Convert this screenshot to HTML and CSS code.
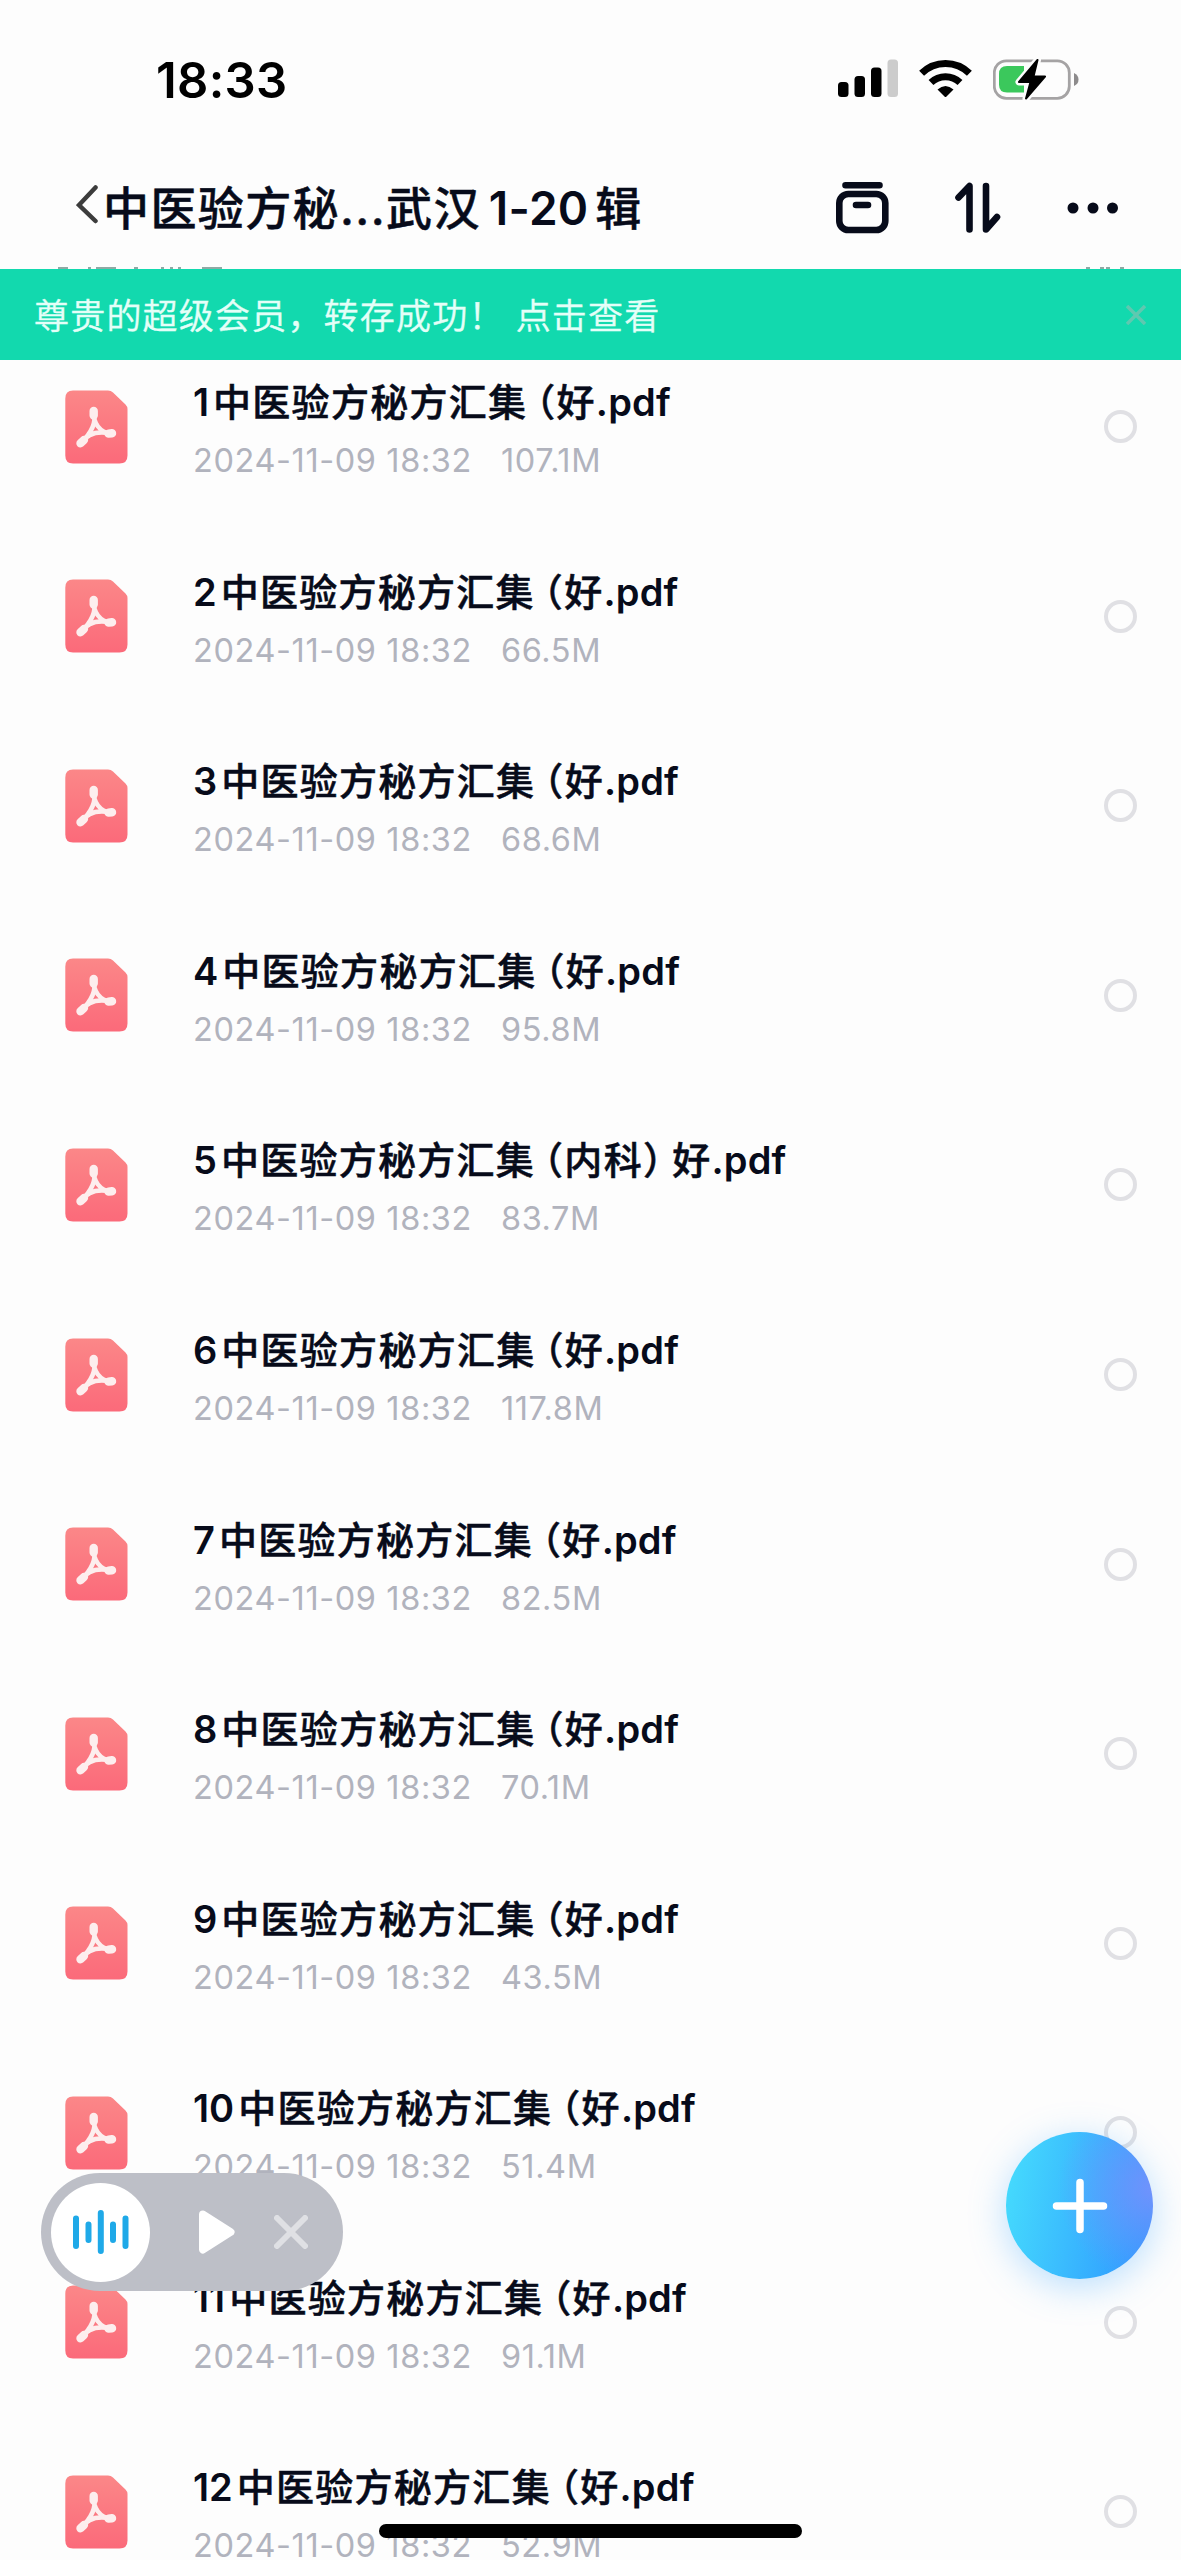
FILE: index.html
```html
<html lang="zh-CN">
<head>
<meta charset="UTF-8">
<meta name="viewport" content="width=device-width, initial-scale=1.0">
<title>中医验方秘…武汉1-20辑</title>
<link rel="stylesheet" href="styles.css">
</head>
<body>
<svg class="defs">
  <defs>
    <linearGradient id="pdf-bg" x1="0" y1="0" x2="0" y2="1">
      <stop offset="0" stop-color="#fb8788"/>
      <stop offset="1" stop-color="#fb6a7a"/>
    </linearGradient>
    <symbol id="pdf" viewBox="0 0 63 74">
      <path fill="url(#pdf-bg)" d="M8 0.5H43Q46 0.5 48 2.5L60.5 14.5Q62.5 16.5 62.5 19V65.5Q62.5 73.5 54.5 73.5H8Q0.3 73.5 0.3 65.5V8.5Q0.3 0.5 8 0.5Z"/>
      <g fill="none" stroke="#fdeeee" stroke-linecap="round">
        <path stroke-width="4.6" d="M28.5 23C28.5 32 34 42.5 46 43.500M28.5 23C32 33 26 43 16 53M16 53C22 44 32 40.500 46 43.500"/>
        <path stroke-width="8.4" d="M28.7 21V25.500M47 43.300L43.5 43.6M15.500 53.300L19 50"/>
      </g>
    </symbol>
  </defs>
</svg>

<div class="status-bar">
  <span class="time">18:33</span>
  <div class="status-icons">
    <svg width="60" height="40" viewBox="0 0 60 40">
      <rect x="0" y="23" width="10.5" height="15" rx="3.5"/>
      <rect x="16.5" y="17" width="10.5" height="21" rx="3.5"/>
      <rect x="33" y="8.5" width="10.5" height="29.5" rx="3.5"/>
      <rect x="49.5" y="0.5" width="10.5" height="37.5" rx="3.5" fill="#cccccc"/>
    </svg>
    <svg width="53" height="40" viewBox="0 0 53 40">
      <g fill="none" stroke="#000" stroke-width="7">
        <path d="M2.6 14.2A34 34 0 0 1 50.4 14.2"/>
        <path d="M12 23.5A21 21 0 0 1 41 23.5"/>
      </g>
      <path d="M18.5 30.5Q26.5 23.5 34.5 30.5L27.5 37.5Q26.5 38.5 25.5 37.5Z"/>
    </svg>
    <svg width="86" height="42" viewBox="0 0 86 42">
      <rect x="1.3" y="1.8" width="75" height="37.5" rx="12" fill="none" stroke="#a5a3a4" stroke-width="2.8"/>
      <path fill="#8d8b8c" d="M81 14Q85.5 16 85.5 20.5T81 27Z"/>
      <path fill="#3bc85c" d="M14 7H31V33.5H14Q6 33.5 6 25.5V15Q6 7 14 7Z"/>
      <path stroke="#fdfdfd" stroke-width="7" stroke-linejoin="round" d="M44.5 1L26 23H37.5L33 39.5L52 17.5H40.5Z"/>
      <path stroke="#000" stroke-width="2" stroke-linejoin="round" d="M44.5 1L26 23H37.5L33 39.5L52 17.5H40.5Z"/>
    </svg>
  </div>
</div>

<div class="header">
  <svg class="back" width="22" height="40" viewBox="0 0 22 40">
    <path d="M19.5 2.5L3 20L19.5 36"/>
  </svg>
  <h1>中医验方秘<span class="dots">...</span>武汉<span class="range">1-20</span>辑</h1>
  <div class="header-icons">
    <svg width="53" height="52" viewBox="0 0 53 52">
      <path d="M9.5 3.3H43.5M20 23H32"/>
      <rect x="3.3" y="12" width="46" height="36" rx="9"/>
    </svg>
    <svg width="46" height="52" viewBox="0 0 46 52">
      <path d="M3.5 15.5L14.5 4V47.5M31 4V47.5L42 35"/>
    </svg>
    <svg class="more" width="52" height="12" viewBox="0 0 52 12">
      <circle cx="6" cy="6" r="5.5"/>
      <circle cx="26" cy="6" r="5.5"/>
      <circle cx="45.5" cy="6" r="5.5"/>
    </svg>
  </div>
</div>

<div class="toast">
  <!-- top edge of the list heading that the toast covers -->
  <svg class="peek" width="1181" height="2" viewBox="0 0 1181 2">
    <path d="M58 1H68M88 1H91M96 1H116M134 1H138M161 1H164M170 1H173M178 1H181M202 1H222M1086 1H1090M1100 1H1104M1106 1H1110M1120 1H1124"/>
  </svg>
  <span>尊贵的超级会员，转存成功！ 点击查看</span>
  <svg class="dismiss" width="20" height="20" viewBox="0 0 20 20"><path d="M1 1L19 19M19 1L1 19"/></svg>
</div>

<div class="list">
  <div class="file">
    <svg class="icon"><use href="#pdf"/></svg>
    <div class="info">
      <h2><span class="num">1</span>中医验方秘方汇集<span class="open">（</span>好<span class="ext">.pdf</span></h2>
      <p>2024-11-09 18:32<span>107.1M</span></p>
    </div>
    <i class="check"></i>
  </div>
  <div class="file">
    <svg class="icon"><use href="#pdf"/></svg>
    <div class="info">
      <h2><span class="num">2</span>中医验方秘方汇集<span class="open">（</span>好<span class="ext">.pdf</span></h2>
      <p>2024-11-09 18:32<span>66.5M</span></p>
    </div>
    <i class="check"></i>
  </div>
  <div class="file">
    <svg class="icon"><use href="#pdf"/></svg>
    <div class="info">
      <h2><span class="num">3</span>中医验方秘方汇集<span class="open">（</span>好<span class="ext">.pdf</span></h2>
      <p>2024-11-09 18:32<span>68.6M</span></p>
    </div>
    <i class="check"></i>
  </div>
  <div class="file">
    <svg class="icon"><use href="#pdf"/></svg>
    <div class="info">
      <h2><span class="num">4</span>中医验方秘方汇集<span class="open">（</span>好<span class="ext">.pdf</span></h2>
      <p>2024-11-09 18:32<span>95.8M</span></p>
    </div>
    <i class="check"></i>
  </div>
  <div class="file">
    <svg class="icon"><use href="#pdf"/></svg>
    <div class="info">
      <h2><span class="num">5</span>中医验方秘方汇集<span class="open">（</span>内科<span class="close">）</span>好<span class="ext">.pdf</span></h2>
      <p>2024-11-09 18:32<span>83.7M</span></p>
    </div>
    <i class="check"></i>
  </div>
  <div class="file">
    <svg class="icon"><use href="#pdf"/></svg>
    <div class="info">
      <h2><span class="num">6</span>中医验方秘方汇集<span class="open">（</span>好<span class="ext">.pdf</span></h2>
      <p>2024-11-09 18:32<span>117.8M</span></p>
    </div>
    <i class="check"></i>
  </div>
  <div class="file">
    <svg class="icon"><use href="#pdf"/></svg>
    <div class="info">
      <h2><span class="num">7</span>中医验方秘方汇集<span class="open">（</span>好<span class="ext">.pdf</span></h2>
      <p>2024-11-09 18:32<span>82.5M</span></p>
    </div>
    <i class="check"></i>
  </div>
  <div class="file">
    <svg class="icon"><use href="#pdf"/></svg>
    <div class="info">
      <h2><span class="num">8</span>中医验方秘方汇集<span class="open">（</span>好<span class="ext">.pdf</span></h2>
      <p>2024-11-09 18:32<span>70.1M</span></p>
    </div>
    <i class="check"></i>
  </div>
  <div class="file">
    <svg class="icon"><use href="#pdf"/></svg>
    <div class="info">
      <h2><span class="num">9</span>中医验方秘方汇集<span class="open">（</span>好<span class="ext">.pdf</span></h2>
      <p>2024-11-09 18:32<span>43.5M</span></p>
    </div>
    <i class="check"></i>
  </div>
  <div class="file">
    <svg class="icon"><use href="#pdf"/></svg>
    <div class="info">
      <h2><span class="num">10</span>中医验方秘方汇集<span class="open">（</span>好<span class="ext">.pdf</span></h2>
      <p>2024-11-09 18:32<span>51.4M</span></p>
    </div>
    <i class="check"></i>
  </div>
  <div class="file">
    <svg class="icon"><use href="#pdf"/></svg>
    <div class="info">
      <h2><span class="num">11</span>中医验方秘方汇集<span class="open">（</span>好<span class="ext">.pdf</span></h2>
      <p>2024-11-09 18:32<span>91.1M</span></p>
    </div>
    <i class="check"></i>
  </div>
  <div class="file">
    <svg class="icon"><use href="#pdf"/></svg>
    <div class="info">
      <h2><span class="num">12</span>中医验方秘方汇集<span class="open">（</span>好<span class="ext">.pdf</span></h2>
      <p>2024-11-09 18:32<span>52.9M</span></p>
    </div>
    <i class="check"></i>
  </div>
</div>

<div class="player">
  <div class="wave">
    <svg width="56" height="44" viewBox="0 0 56 44">
      <path d="M3 8.5V36M15.5 14.5V30M27.8 3V41M40 14.5V30M52.5 8.5V36"/>
    </svg>
  </div>
  <svg class="play" width="36" height="44" viewBox="0 0 36 44">
    <path d="M4 4.5L31.5 22L4 39.5Z"/>
  </svg>
  <svg class="stop" width="34" height="34" viewBox="0 0 34 34">
    <path d="M3 3L31 31M31 3L3 31"/>
  </svg>
</div>

<button class="add">
  <svg width="56" height="56" viewBox="0 0 56 56"><path d="M28 4.5V51.5M4.5 28H51.5"/></svg>
</button>

<div class="home-indicator"></div>
</body>
</html>
```
FILE: styles.css
```css
* {
  box-sizing: border-box;
}

body {
  position: relative;
  width: 1181px;
  height: 2560px;
  margin: 0;
  overflow: hidden;
  background-color: #fdfdfd;
  color: #070b1a;
  font-family: Inter, "Noto Sans CJK SC", sans-serif;
}

.defs {
  display: block;
  width: 0;
  height: 0;
}

.status-bar {
  display: flex;
  justify-content: space-between;
  height: 160px;
  padding: 59px 102px 0 156px;
}

.time {
  color: #000;
  font-size: 49px;
  font-weight: 600;
  letter-spacing: 0.3px;
  line-height: 44px;
}

.status-icons {
  display: flex;
  gap: 21px;
}

.header {
  display: flex;
  align-items: center;
  height: 109px;
  padding: 0 62px 13px 76px;
}

.back {
  margin: -7px 5px 0 0;
  fill: none;
  stroke: #3c3c3c;
  stroke-width: 4.5;
  stroke-linecap: round;
}

.header h1 {
  flex: 1;
  margin: 0;
  font-size: 46px;
  font-weight: 500;
  letter-spacing: 1.4px;
  line-height: 60px;
  white-space: nowrap;
  -webkit-text-stroke: 0.5px #070b1a;
}

.header h1 .range {
  margin: 0 7px 0 8px;
  font-weight: 600;
  letter-spacing: 0.2px;
  -webkit-text-stroke: 0;
}

.header-icons {
  display: flex;
  align-items: center;
  gap: 66px;
  fill: none;
  stroke: #070b1a;
  stroke-width: 6.6;
  stroke-linecap: round;
  stroke-linejoin: round;
}

.header-icons .more {
  fill: #070b1a;
  stroke: none;
}

.toast {
  position: relative;
  z-index: 1;
  display: flex;
  align-items: center;
  justify-content: space-between;
  height: 91px;
  padding: 0 35px 0 34px;
  background-color: #12d9ae;
  color: #e4fff8;
  font-size: 35px;
  font-weight: 350;
  letter-spacing: 1.2px;
}

.toast span {
  margin-top: -3px;
  -webkit-text-stroke: 0.4px #e4fff8;
}

.toast .dismiss {
  fill: none;
  stroke: #5fc8b0;
  stroke-width: 3.5;
}

.toast .peek {
  position: absolute;
  left: 0;
  top: -2px;
  stroke: #8fa9a4;
  stroke-width: 2;
}

.list {
  margin-top: -28px;
}

.file {
  display: flex;
  align-items: center;
  height: 189.56px;
  padding: 0 44px 0 65px;
}

.icon {
  width: 63px;
  height: 74px;
}

.info {
  flex: 1;
  margin: 4px 0 0 65px;
  white-space: nowrap;
}

.info h2 {
  margin: 0;
  font-size: 38px;
  font-weight: 500;
  letter-spacing: 1.27px;
  line-height: 56px;
  -webkit-text-stroke: 0.5px #070b1a;
}

.num {
  margin-right: 4px;
  font-weight: 600;
  letter-spacing: 0;
  -webkit-text-stroke: 0;
}

.open,
.close {
  font-feature-settings: "halt";
}

.open {
  margin-left: 9px;
}

.close {
  margin-right: 9px;
}

.ext {
  font-weight: 600;
  letter-spacing: 0.2px;
  -webkit-text-stroke: 0;
}

.info p {
  margin: 9px 0 0;
  color: #b1b3bd;
  font-size: 32.5px;
  letter-spacing: 0.6px;
  line-height: 44px;
}

.info p span {
  margin-left: 29px;
}

.check {
  width: 33px;
  height: 33px;
  border: 4px solid #e0e0e4;
  border-radius: 50%;
}

.player {
  position: absolute;
  left: 41px;
  top: 2173px;
  display: flex;
  align-items: center;
  width: 302px;
  height: 118px;
  padding-left: 10px;
  border-radius: 59px;
  background-color: #bdbfc7;
}

.wave {
  display: flex;
  align-items: center;
  justify-content: center;
  width: 99px;
  height: 99px;
  border-radius: 50%;
  background-color: #fff;
}

.wave svg {
  fill: none;
  stroke: #1fa9e8;
  stroke-width: 6;
  stroke-linecap: round;
}

.play {
  margin-left: 49px;
  fill: #fff;
  stroke: #fff;
  stroke-width: 8;
  stroke-linejoin: round;
}

.stop {
  margin-left: 39px;
  fill: none;
  stroke: #dfe0e4;
  stroke-width: 6;
  stroke-linecap: round;
}

.add {
  position: absolute;
  left: 1006px;
  top: 2132px;
  display: flex;
  align-items: center;
  justify-content: center;
  width: 147px;
  height: 147px;
  padding: 0;
  border: none;
  border-radius: 50%;
  background: radial-gradient(circle at 100% 38%, rgba(116, 146, 252, 0.95) 0, rgba(116, 146, 252, 0) 55%), linear-gradient(100deg, #45dafd 5%, #2f9bff 90%);
  box-shadow: 0 8px 36px rgba(60, 165, 255, 0.35);
}

.add svg {
  fill: none;
  stroke: #fff;
  stroke-width: 7.5;
  stroke-linecap: round;
}

.home-indicator {
  position: absolute;
  left: 379px;
  top: 2524px;
  width: 423px;
  height: 14px;
  border-radius: 7px;
  background-color: #000;
}
```
